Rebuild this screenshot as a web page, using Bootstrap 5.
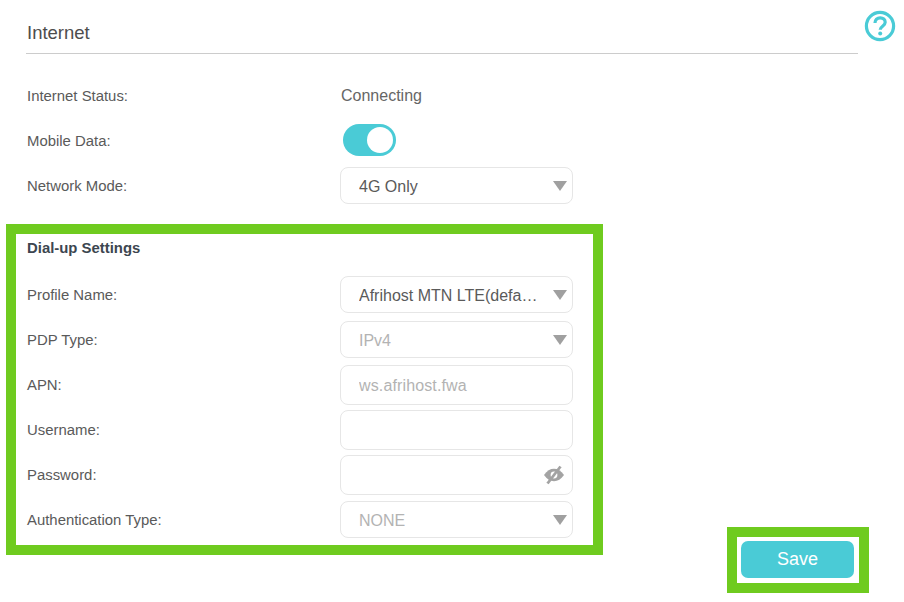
<!DOCTYPE html>
<html lang="en">
<head>
<meta charset="utf-8">
<title>Internet</title>
<link href="https://cdn.jsdelivr.net/npm/bootstrap@5.3.0/dist/css/bootstrap.min.css" rel="stylesheet">
<style>
body{font-family:"Liberation Sans",Arial,sans-serif;color:#5a5a5a;background:#fff;font-size:15px;overflow:hidden}
.top-title{margin-left:26px;padding-left:1px;width:832px;height:54px;border-bottom:1px solid #ccc;font-size:18.5px;line-height:66px;color:#4d4d4d;flex:none}
.help-wrap{margin:10px 0 0 6px;width:34px;height:32px;line-height:0}
.body-wrap{margin-top:19px;padding-bottom:38px}
.left-col{width:603px;flex:none}
.plain-rows{padding-left:26px}
.fld-row{height:45px}
.fld-label{width:314px;flex:none;font-size:14.9px;margin-top:1px;padding-left:1px}
.fld-body{width:233px;flex:none;position:relative}
.status-text{font-size:16px;padding-left:1px;color:#666}
.dial-box{margin:16px 0 0 6px;width:597px;border:10px solid #6fcb1f;padding:0 0 3px 10px}
.dial-head{height:28px;line-height:28px;font-size:14.9px;font-weight:700;color:#3c4650;margin-bottom:10px;padding-left:1px}
.form-select.tp-field,.form-control.tp-field{font-size:16px;color:#5a5a5a;height:37px;padding:2px 33px 0 18px;border:1px solid #e6e6e6;border-radius:8px;background-color:#fff;box-shadow:none;text-overflow:ellipsis;white-space:nowrap;overflow:hidden}
.form-select.tp-field{background-image:url("data:image/svg+xml,%3Csvg xmlns='http://www.w3.org/2000/svg' viewBox='0 0 14 10'%3E%3Cpath fill='%23a0a0a0' d='M0 0h14L7 10z'/%3E%3C/svg%3E");background-repeat:no-repeat;background-position:right 5px center;background-size:14px 10px}
.form-control.tp-field{height:40px;letter-spacing:.13px}
.form-select.tp-field:disabled,.form-control.tp-field:disabled{color:#b3b3b3;background-color:#fff;opacity:1}
.toggle-holder{min-height:0;margin:-1px 0 1px 3px;padding:0;height:32px;line-height:0}
.toggle-holder .form-check-input{width:53px;height:32px;margin:0;float:none;border:0;background-color:#4acbd6;border-radius:16px;box-shadow:none;background-position:right center;background-image:url("data:image/svg+xml,%3Csvg xmlns='http://www.w3.org/2000/svg' viewBox='-4 -4 8 8'%3E%3Ccircle r='3.25' fill='%23fff'/%3E%3C/svg%3E")}
.eye-icon{position:absolute;right:8px;top:10px;width:22px;height:20px;display:block}
.save-box{margin-left:auto;margin-right:35px;margin-bottom:-38px;border:10px solid #6fcb1f;padding:4px;width:142px;height:66px}
.save-btn{display:block;width:113px;height:37px;padding:0 0 2px;margin-left:0;background:#4acbd6;border:0;border-radius:7px;color:#fff;font-size:18px;line-height:34px}
.save-btn:hover,.save-btn:active{background:#4acbd6;color:#fff}
</style>
</head>
<body>
<div class="d-flex">
  <div class="top-title">Internet</div>
  <div class="help-wrap">
    <svg width="34" height="32" viewBox="0 0 34 32" aria-hidden="true">
      <circle cx="16" cy="16" r="13.6" fill="none" stroke="#4acbd6" stroke-width="3.2"/>
      <path d="M11 13c0-3.300 2.200-5.200 5.200-5.200s5 1.800 5 4.400c0 4-5 4-5 7.600" fill="none" stroke="#4acbd6" stroke-width="3.2"/>
      <circle cx="16.200" cy="23.500" r="2" fill="#4acbd6"/>
    </svg>
  </div>
</div>
<div class="d-flex align-items-end body-wrap">
  <div class="left-col">
    <div class="plain-rows">
      <div class="d-flex align-items-center fld-row">
        <div class="fld-label">Internet Status:</div>
        <div class="fld-body status-text">Connecting</div>
      </div>
      <div class="d-flex align-items-center fld-row">
        <div class="fld-label">Mobile Data:</div>
        <div class="fld-body"><div class="form-check form-switch toggle-holder"><input class="form-check-input" type="checkbox" role="switch" checked aria-label="Mobile Data"></div></div>
      </div>
      <div class="d-flex align-items-center fld-row">
        <div class="fld-label">Network Mode:</div>
        <div class="fld-body"><select class="form-select tp-field" aria-label="Network Mode"><option>4G Only</option></select></div>
      </div>
    </div>
    <div class="dial-box">
      <div class="dial-head">Dial-up Settings</div>
      <div class="d-flex align-items-center fld-row">
        <div class="fld-label">Profile Name:</div>
        <div class="fld-body"><select class="form-select tp-field" aria-label="Profile Name"><option>Afrihost MTN LTE(default)</option></select></div>
      </div>
      <div class="d-flex align-items-center fld-row">
        <div class="fld-label">PDP Type:</div>
        <div class="fld-body"><select class="form-select tp-field" disabled aria-label="PDP Type"><option>IPv4</option></select></div>
      </div>
      <div class="d-flex align-items-center fld-row">
        <div class="fld-label">APN:</div>
        <div class="fld-body"><input class="form-control tp-field" disabled value="ws.afrihost.fwa" aria-label="APN"></div>
      </div>
      <div class="d-flex align-items-center fld-row">
        <div class="fld-label">Username:</div>
        <div class="fld-body"><input class="form-control tp-field" aria-label="Username"></div>
      </div>
      <div class="d-flex align-items-center fld-row">
        <div class="fld-label">Password:</div>
        <div class="fld-body"><input class="form-control tp-field" type="password" aria-label="Password">
          <svg class="eye-icon" viewBox="0 0 22 20" aria-hidden="true">
            <path d="M1 10c3-4.400 6.200-6.200 10-6.200S18 5.600 21 10c-3 4.400-6.200 6.200-10 6.200S4 14.400 1 10z" fill="#a3a3a3"/>
            <circle cx="11" cy="10" r="3.400" fill="#fff"/>
            <path d="M4.500 18.500L17.500 1.500" stroke="#a3a3a3" stroke-width="2.800"/>
          </svg>
        </div>
      </div>
      <div class="d-flex align-items-center fld-row">
        <div class="fld-label">Authentication Type:</div>
        <div class="fld-body"><select class="form-select tp-field" disabled aria-label="Authentication Type"><option>NONE</option></select></div>
      </div>
    </div>
  </div>
  <div class="save-box"><button type="button" class="btn save-btn">Save</button></div>
</div>
<script src="https://cdn.jsdelivr.net/npm/bootstrap@5.3.0/dist/js/bootstrap.bundle.min.js"></script>
</body>
</html>
